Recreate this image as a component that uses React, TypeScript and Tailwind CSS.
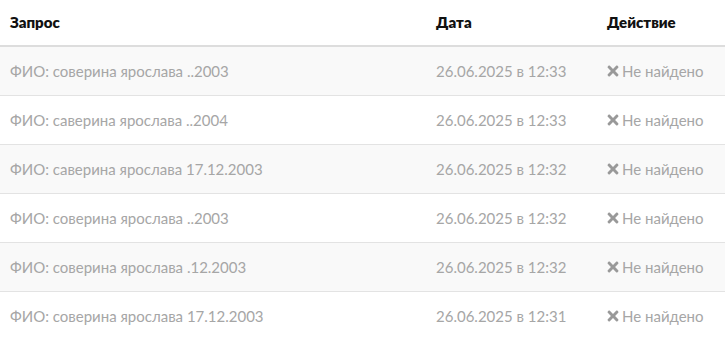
import { FaTimes } from "react-icons/fa";

const rows = [
  { q: "ФИО: соверина ярослава ..2003", d: "26.06.2025 в 12:33" },
  { q: "ФИО: саверина ярослава ..2004", d: "26.06.2025 в 12:33" },
  { q: "ФИО: саверина ярослава 17.12.2003", d: "26.06.2025 в 12:32" },
  { q: "ФИО: соверина ярослава ..2003", d: "26.06.2025 в 12:32" },
  { q: "ФИО: соверина ярослава .12.2003", d: "26.06.2025 в 12:32" },
  { q: "ФИО: соверина ярослава 17.12.2003", d: "26.06.2025 в 12:31" },
];

// search history table
export default function App() {
  return (
    <div className="w-[725px] h-[338px] overflow-hidden bg-white font-['Lato',sans-serif] text-[15px]">
      <div className="grid grid-cols-[426px_171px_1fr] h-[47px] items-center border-b-2 border-[#dddddd] text-[#111] font-extrabold">
        <div className="px-[10px]">Запрос</div>
        <div className="px-[10px]">Дата</div>
        <div className="px-[10px]">Действие</div>
      </div>
      {rows.map((r, i) => (
        <div
          key={i}
          className={`grid grid-cols-[426px_171px_1fr] h-[49px] items-center border-b border-[#e3e3e3] text-[#a6a6a6] ${i % 2 === 0 ? "bg-[#f9f9f9]" : "bg-white"}`}
        >
          <div className="px-[10px]">{r.q}</div>
          <div className="px-[10px]">{r.d}</div>
          <div className="pl-[8px] flex items-center gap-[1px]">
            <FaTimes size={16} className="text-[#999]" />
            <span>Не найдено</span>
          </div>
        </div>
      ))}
    </div>
  );
}
